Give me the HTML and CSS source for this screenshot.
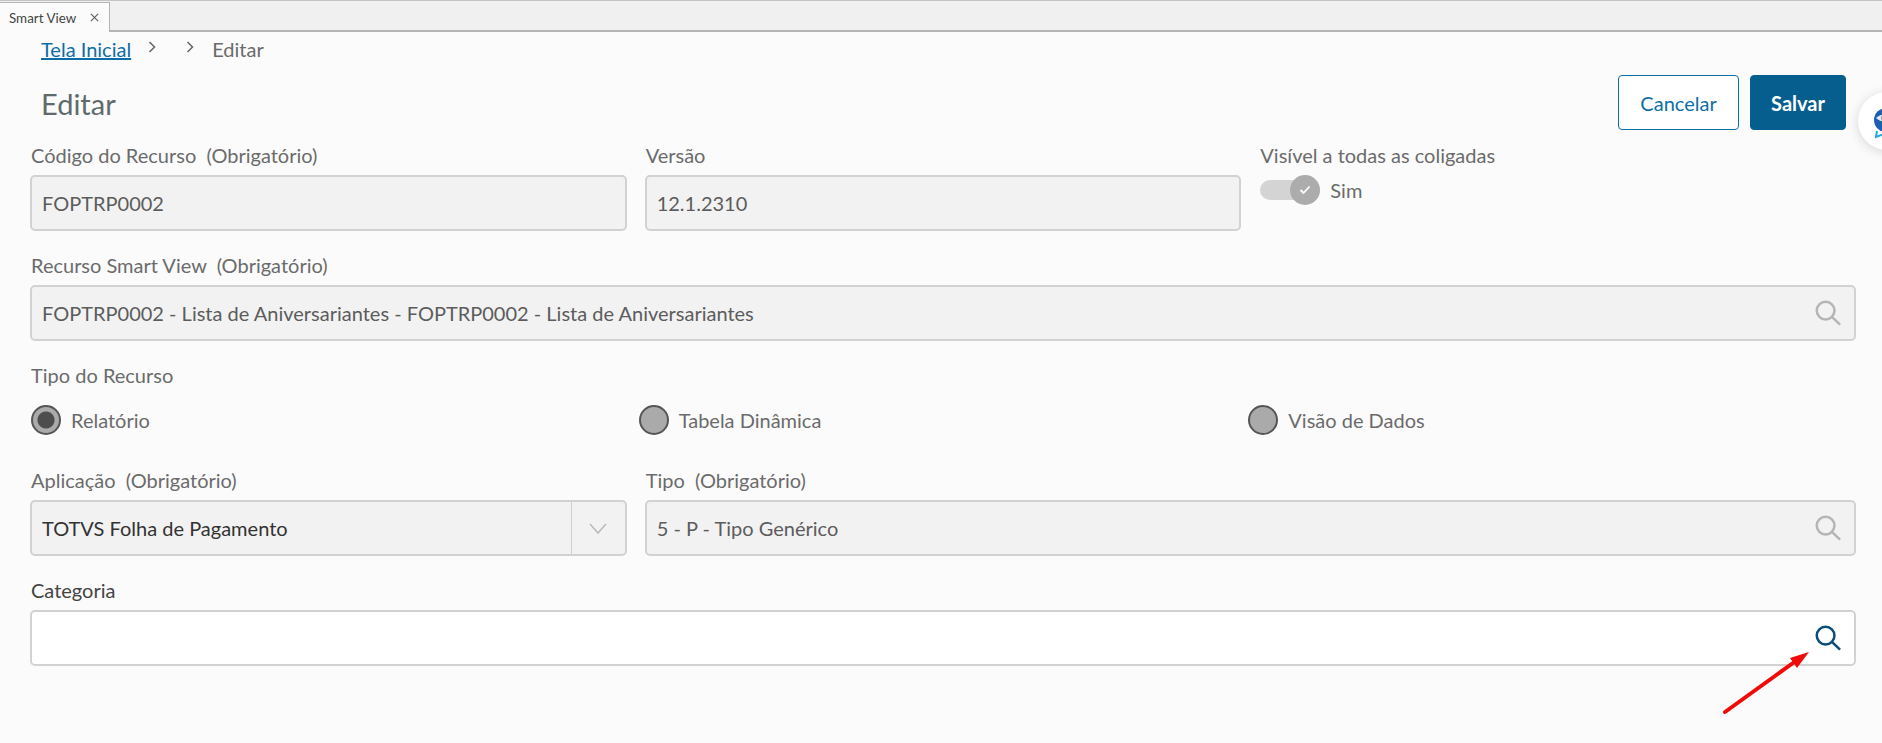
FILE: index.html
```html
<!DOCTYPE html>
<html lang="pt-BR">
<head>
    <meta charset="UTF-8">
    <title>Smart View</title>
    <link rel="stylesheet" href="styles.css">
</head>
<body>
    <div class="tabbar">
        <div class="tab">
            <span>Smart View</span>
            <svg class="tab-close" viewBox="0 0 10 10"><path d="M1 1l8 8M9 1l-8 8"/></svg>
        </div>
    </div>

    <div class="page">
        <div class="breadcrumb">
            <a href="#">Tela Inicial</a>
            <svg class="crumb-sep" viewBox="0 0 8 12"><path d="M1.5 1l5 5-5 5"/></svg>
            <svg class="crumb-sep" viewBox="0 0 8 12"><path d="M1.5 1l5 5-5 5"/></svg>
            <span>Editar</span>
        </div>

        <div class="title-row">
            <h1>Editar</h1>
            <div class="actions">
                <button class="btn btn-outline">Cancelar</button>
                <button class="btn btn-primary">Salvar</button>
            </div>
        </div>

        <div class="form">
            <div class="field">
                <label>Código do Recurso&nbsp;&nbsp;(Obrigatório)</label>
                <div class="input disabled">FOPTRP0002</div>
            </div>
            <div class="field">
                <label>Versão</label>
                <div class="input disabled">12.1.2310</div>
            </div>
            <div class="field">
                <label>Visível a todas as coligadas</label>
                <div class="switch">
                    <div class="switch-track">
                        <div class="switch-knob">
                            <svg viewBox="0 0 12 10"><path d="M1.5 5l3 3 6-6.5"/></svg>
                        </div>
                    </div>
                    <span>Sim</span>
                </div>
            </div>

            <div class="field span-3">
                <label>Recurso Smart View&nbsp;&nbsp;(Obrigatório)</label>
                <div class="input disabled">
                    <span>FOPTRP0002 - Lista de Aniversariantes - FOPTRP0002 - Lista de Aniversariantes</span>
                    <svg class="search" viewBox="0 0 28 28"><circle cx="11" cy="11" r="9.2"/><path d="M17.8 17.8L26 25.5"/></svg>
                </div>
            </div>

            <div class="field span-3 radio-field">
                <label>Tipo do Recurso</label>
                <div class="radios">
                    <div class="radio checked"><i></i>Relatório</div>
                    <div class="radio"><i></i>Tabela Dinâmica</div>
                    <div class="radio"><i></i>Visão de Dados</div>
                </div>
            </div>

            <div class="field">
                <label>Aplicação&nbsp;&nbsp;(Obrigatório)</label>
                <div class="input disabled select">
                    <span class="select-value">TOTVS Folha de Pagamento</span>
                    <div class="select-arrow">
                        <svg viewBox="0 0 18 11"><path d="M1 1l8 9 8-9"/></svg>
                    </div>
                </div>
            </div>
            <div class="field span-2">
                <label>Tipo&nbsp;&nbsp;(Obrigatório)</label>
                <div class="input disabled">
                    <span>5 - P - Tipo Genérico</span>
                    <svg class="search" viewBox="0 0 28 28"><circle cx="11" cy="11" r="9.2"/><path d="M17.8 17.8L26 25.5"/></svg>
                </div>
            </div>

            <div class="field span-3">
                <label class="dark">Categoria</label>
                <div class="input">
                    <span></span>
                    <svg class="search active" viewBox="0 0 28 28"><circle cx="11" cy="11" r="9.2"/><path d="M17.8 17.8L26 25.5"/></svg>
                </div>
            </div>
        </div>
    </div>

    <!-- floating assistant, cut off by the window edge -->
    <div class="assistant">
        <svg viewBox="0 0 30 34">
            <circle cx="13" cy="14" r="12" fill="#1d5fae"/>
            <path d="M3 12c5-5 14-5 22 1-8 4-17 4-22-1z" fill="#dfeaf6"/>
            <circle cx="12" cy="12" r="3.5" fill="#12447f"/>
            <path d="M4 25l-1 6 8-3" fill="none" stroke="#25a4e6" stroke-width="2"/>
            <path d="M9 29h16" stroke="#25a4e6" stroke-width="2"/>
        </svg>
    </div>

    <!-- annotation drawn on top of the screenshot -->
    <svg class="annotation" viewBox="0 0 95 72">
        <path d="M5 67L73 18" stroke="#f00a0a" stroke-width="4" stroke-linecap="round"/>
        <path d="M89 7L70 13L77 23z" fill="#f00a0a"/>
    </svg>
</body>
</html>
```

FILE: styles.css
```css
* {
    box-sizing: border-box;
}
html, body {
    height: 100%;
}
body {
    margin: 0;
    overflow: hidden;
    position: relative;
    background: #fbfbfb;
    color: #6b6b6b;
    font-family: 'Lato', sans-serif;
    font-size: 20px;
}
.tabbar {
    height: 32px;
    padding-top: 2px;
    background: #f0f0f0;
    border-top: 1px solid #c4c4c4;
    border-bottom: 2px solid #b4b4b4;
    display: flex;
}
.tab {
    width: 110px;
    height: 30px;
    margin-top: -1px;
    padding: 0 10px 0 9px;
    display: flex;
    align-items: center;
    justify-content: space-between;
    background: #fbfbfb;
    border: 1px solid #b4b4b4;
    border-left: 0;
    border-bottom: 0;
    font-size: 13.4px;
    color: #444;
}
.tab-close {
    width: 9px;
    height: 9px;
    fill: none;
    stroke: #666;
    stroke-width: 1.4;
}
.page {
    padding: 0 26px 0 30px;
}
.breadcrumb {
    height: 43px;
    padding: 5px 0 0 11px;
    display: flex;
    align-items: flex-start;
    line-height: 24px;
}
.breadcrumb a {
    color: #0c6ea6;
    text-decoration: underline;
}
.crumb-sep {
    width: 8px;
    height: 12px;
    margin: 4px 0 0 0;
    fill: none;
    stroke: #666;
    stroke-width: 1.5;
}
.crumb-sep:nth-of-type(1) {
    margin-left: 17px;
}
.crumb-sep:nth-of-type(2) {
    margin-left: 30px;
    margin-right: 18px;
}
.title-row {
    height: 55px;
    display: flex;
    align-items: center;
    justify-content: space-between;
}
.title-row h1 {
    margin: 1px 0 0 11px;
    font-size: 29px;
    font-weight: 400;
    color: #5f6b6b;
}
.actions {
    display: flex;
    gap: 11px;
    margin-right: 10px;
}
.btn {
    height: 55px;
    border-radius: 4px;
    font-family: inherit;
    font-size: 20px;
}
.btn-outline {
    width: 121px;
    background: #fff;
    border: 1px solid #0c6ea6;
    color: #0c6ea6;
}
.btn-primary {
    width: 96px;
    background: #065e8f;
    border: 1px solid #065e8f;
    color: #fff;
    font-weight: 700;
}
.form {
    margin-top: 14px;
    display: grid;
    grid-template-columns: repeat(3, 1fr);
    column-gap: 18px;
    row-gap: 23px;
}
.span-2 {
    grid-column: span 2;
}
.span-3 {
    grid-column: span 3;
}
.field label {
    display: block;
    height: 22px;
    margin-bottom: 9px;
    padding-left: 1px;
    line-height: 22px;
}
.field label.dark {
    color: #444;
}
.input {
    height: 56px;
    padding: 0 12px 0 10px;
    display: flex;
    align-items: center;
    justify-content: space-between;
    background: #fff;
    border: 2px solid #d2d2d2;
    border-radius: 5px;
    color: #5c5c5c;
}
.input.disabled {
    background: #f2f2f2;
}
.select {
    padding: 0;
}
.select-value {
    padding-left: 10px;
    color: #333;
}
.select-arrow {
    width: 54px;
    height: 100%;
    display: flex;
    align-items: center;
    justify-content: center;
    border-left: 1px solid #cfcfcf;
}
.select-arrow svg {
    width: 18px;
    height: 11px;
    fill: none;
    stroke: #bbb;
    stroke-width: 1.6;
}
.search {
    width: 27px;
    height: 27px;
    flex-shrink: 0;
    fill: none;
    stroke: #b5b5b5;
    stroke-width: 2.6;
}
.search.active {
    stroke: #0a4d78;
}
.switch {
    height: 30px;
    margin-left: 1px;
    display: flex;
    align-items: center;
    gap: 10px;
}
.switch-track {
    width: 60px;
    height: 20px;
    display: flex;
    align-items: center;
    justify-content: flex-end;
    background: #d4d4d4;
    border-radius: 10px;
}
.switch-knob {
    width: 30px;
    height: 30px;
    display: flex;
    align-items: center;
    justify-content: center;
    background: #acacac;
    border-radius: 50%;
}
.switch-knob svg {
    width: 12px;
    height: 10px;
    fill: none;
    stroke: #fff;
    stroke-width: 1.8;
}
.field.radio-field label {
    margin-bottom: 19px;
}
.radio-field {
    margin-bottom: 11px;
}
.radios {
    display: grid;
    grid-template-columns: repeat(3, 1fr);
    column-gap: 18px;
}
.radio {
    height: 30px;
    display: flex;
    align-items: center;
    gap: 10px;
}
.radio:nth-child(1) {
    margin-left: 1px;
}
.radio:nth-child(2) {
    margin-left: -6px;
}
.radio:nth-child(3) {
    margin-left: -11px;
}
.radio i {
    width: 30px;
    height: 30px;
    display: block;
    background: #aaa;
    border: 2px solid #555;
    border-radius: 50%;
}
.radio.checked i {
    background: radial-gradient(circle, #4d4d4d 0, #4d4d4d 8px, #aaa 9px);
}
.assistant {
    position: absolute;
    left: 1858px;
    top: 92px;
    width: 58px;
    height: 58px;
    padding: 14px 0 0 15px;
    background: #fff;
    border-radius: 50%;
    box-shadow: 0 2px 12px rgba(0, 0, 0, 0.15);
}
.assistant svg {
    width: 30px;
    height: 34px;
    display: block;
}
.annotation {
    position: absolute;
    left: 1720px;
    top: 645px;
    width: 95px;
    height: 72px;
}
```
